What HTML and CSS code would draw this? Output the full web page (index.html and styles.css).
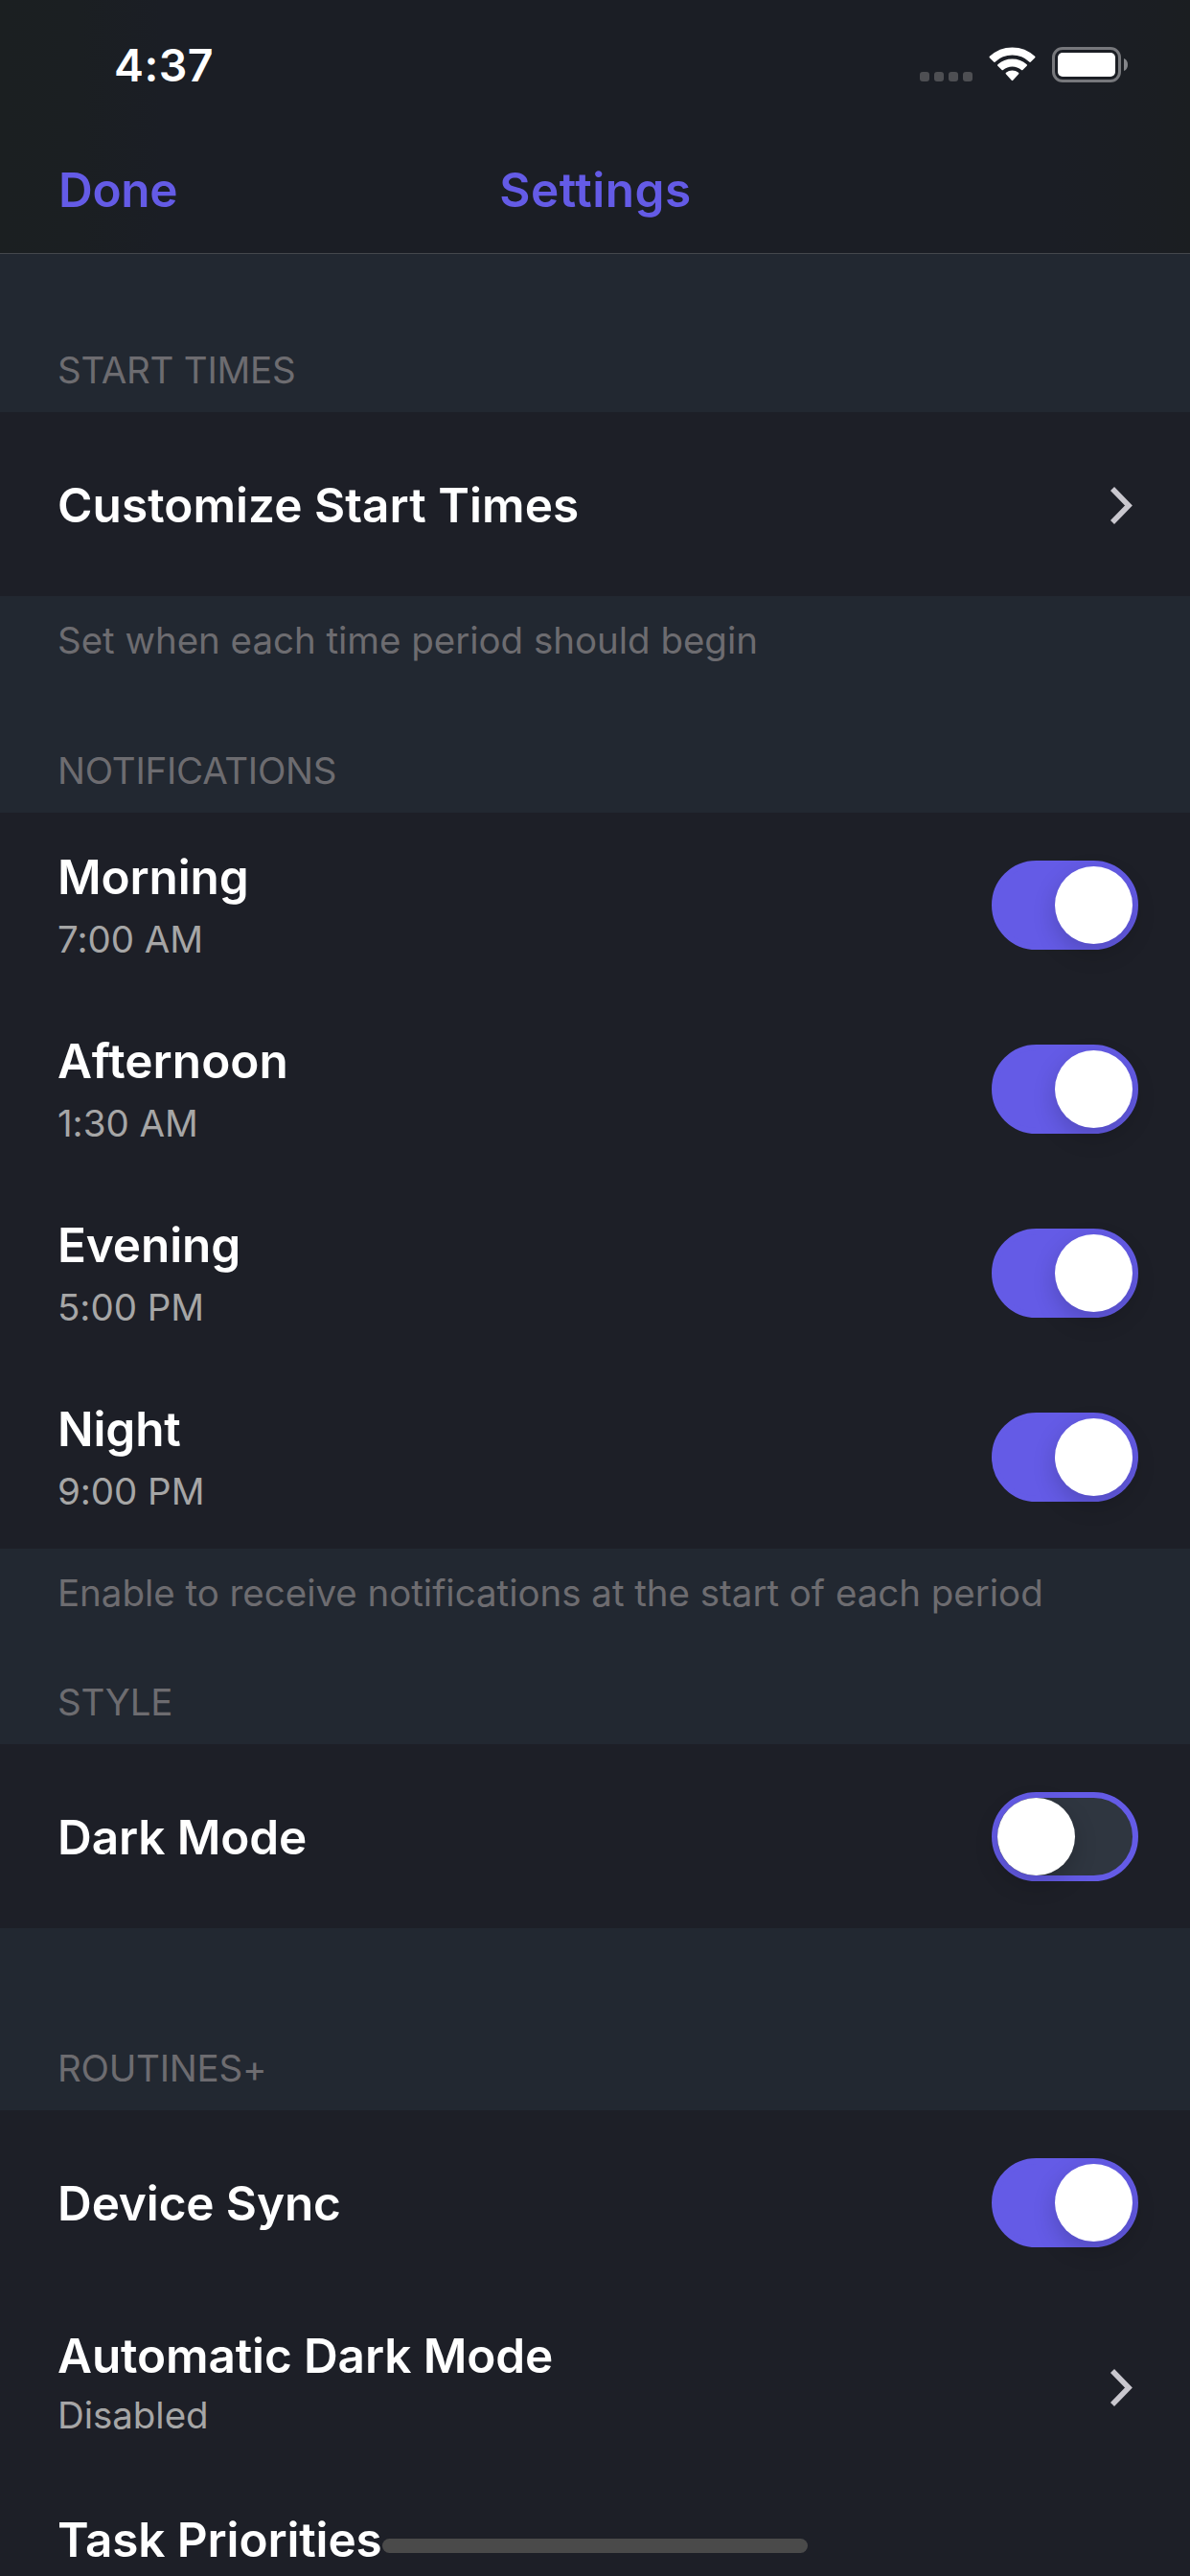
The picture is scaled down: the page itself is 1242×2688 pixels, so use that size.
FILE: index.html
```
<!DOCTYPE html>
<html lang="en">
<head>
<meta charset="utf-8">
<title>Settings</title>
<link rel="stylesheet" href="styles.css">
</head>
<body>
<div class="screen">
  <header class="header">
    <div class="status-bar">
      <span class="time">4:37</span>
      <div class="indicators">
        <div class="cellular"><i></i><i></i><i></i><i></i></div>
        <svg class="wifi" width="49" height="36" viewBox="0 0 49 36" aria-hidden="true">
          <g transform="translate(24.5 35)" fill="#fff" stroke="#fff" stroke-width="2" stroke-linejoin="round">
            <path d="M-23-24.4A33.5 33.5 0 0 1 23-24.4L18.7-20.1A27.5 27.5 0 0 0-18.7-20.1Z"/>
            <path d="M-14.5-15.9A21.5 21.5 0 0 1 14.5-15.9L10.2-11.7A15.5 15.5 0 0 0-10.2-11.7Z"/>
            <path d="M-5.9-7.5A9.5 9.5 0 0 1 5.9-7.5L0-.9Z"/>
          </g>
        </svg>
        <svg class="battery" width="79" height="37" viewBox="0 0 79 37" aria-hidden="true">
          <rect x="1.5" y="1.5" width="69" height="34" rx="9.5" fill="none" stroke="#77787c" stroke-width="3"/>
          <rect x="6" y="6" width="60" height="25" rx="5" fill="#fff"/>
          <path d="M75 12C78 13 79 16 79 18.500S78 24 75 25Z" fill="#85868a"/>
        </svg>
      </div>
    </div>
    <nav class="nav-bar">
      <span class="done">Done</span>
      <span class="nav-title">Settings</span>
    </nav>
  </header>

  <main>
    <h2 class="section-title section-start">START TIMES</h2>
    <section class="group">
      <div class="row single">
        <div class="labels"><div class="label label-wide">Customize Start Times</div></div>
        <svg class="chevron" width="23" height="39" viewBox="0 0 23 39" aria-hidden="true"><path d="M2 2L19 19.500L2 37"/></svg>
      </div>
    </section>
    <p class="footnote">Set when each time period should begin</p>

    <h2 class="section-title section-notifications">NOTIFICATIONS</h2>
    <section class="group">
      <div class="row timed">
        <div class="labels"><div class="label">Morning</div><div class="detail">7:00 AM</div></div>
        <div class="switch on"><i class="knob"></i></div>
      </div>
      <div class="row timed">
        <div class="labels"><div class="label label-wide">Afternoon</div><div class="detail">1:30 AM</div></div>
        <div class="switch on"><i class="knob"></i></div>
      </div>
      <div class="row timed">
        <div class="labels"><div class="label">Evening</div><div class="detail">5:00 PM</div></div>
        <div class="switch on"><i class="knob"></i></div>
      </div>
      <div class="row timed">
        <div class="labels"><div class="label">Night</div><div class="detail">9:00 PM</div></div>
        <div class="switch on"><i class="knob"></i></div>
      </div>
    </section>
    <p class="footnote">Enable to receive notifications at the start of each period</p>

    <h2 class="section-title section-style">STYLE</h2>
    <section class="group">
      <div class="row single">
        <div class="labels"><div class="label">Dark Mode</div></div>
        <div class="switch"><i class="knob"></i></div>
      </div>
    </section>

    <h2 class="section-title section-routines">ROUTINES+</h2>
    <section class="group">
      <div class="row single">
        <div class="labels"><div class="label">Device Sync</div></div>
        <div class="switch on"><i class="knob"></i></div>
      </div>
      <div class="row stacked">
        <div class="labels"><div class="label">Automatic Dark Mode</div><div class="detail">Disabled</div></div>
        <svg class="chevron" width="23" height="39" viewBox="0 0 23 39" aria-hidden="true"><path d="M2 2L19 19.500L2 37"/></svg>
      </div>
      <div class="row stacked">
        <div class="labels"><div class="label">Task Priorities</div></div>
      </div>
    </section>
  </main>
  <div class="home-indicator"></div>
</div>
</body>
</html>
```
FILE: styles.css
```
* {
  box-sizing: border-box;
  margin: 0;
  padding: 0;
}

body {
  background: #222831;
  font-family: Inter, "Liberation Sans", sans-serif;
}

.screen {
  position: relative;
  width: 1242px;
  height: 2688px;
  overflow: hidden;
  background: #222831;
}

/* Header */
.header {
  height: 265px;
  border-bottom: 1px solid #44474c;
  background: linear-gradient(90deg, #1b1f21 0, #1b1f22 80px, #1b1e25 170px, #1b1e25 1100px, #1b1e22 1220px, #1b1e21 100%);
}

.status-bar {
  display: flex;
  justify-content: space-between;
  height: 128px;
  padding: 40px 65px 0 119px;
}

.time {
  color: #fff;
  font-size: 46.5px;
  font-weight: 600;
  line-height: 56px;
  letter-spacing: 0.45px;
}

.indicators {
  display: flex;
  align-items: flex-start;
  padding-top: 9px;
}

.cellular {
  display: flex;
  gap: 5px;
  padding-top: 26px;
  margin-right: 17px;
}

.cellular i {
  width: 10px;
  height: 10px;
  border-radius: 3px;
  background: #4e4f53;
}

.battery {
  margin-left: 17px;
}

.nav-bar {
  display: grid;
  grid-template-columns: 1fr auto 1fr;
  padding: 40px 60px 0 61px;
  color: #645be6;
  font-size: 49.5px;
  font-weight: 600;
  line-height: 60px;
}

.done {
  letter-spacing: -0.3px;
}

.nav-title {
  letter-spacing: 0.5px;
}

/* Section text */
.section-title {
  display: flex;
  align-items: flex-end;
  padding: 0 60px 20px;
  color: #6d6c70;
  font-size: 38.5px;
  font-weight: 400;
  line-height: 48px;
  letter-spacing: -0.25px;
}

.section-start { height: 165px; }
.section-notifications { height: 156px; }
.section-style { height: 134px; }
.section-routines { height: 190px; }

.footnote {
  height: 70px;
  padding: 22px 60px 0;
  color: #6d6c70;
  font-size: 38.5px;
  line-height: 48px;
  letter-spacing: -0.03px;
}

/* Rows */
.group {
  background: #1d1f27;
}

.row {
  display: flex;
  justify-content: space-between;
  align-items: flex-start;
  height: 192px;
  padding: 0 54px 0 60px;
}

.labels {
  display: flex;
  flex-direction: column;
}

.single .labels { padding-top: 67px; }
.timed .labels { padding-top: 37px; gap: 11px; }
.stacked .labels { padding-top: 34px; gap: 8px; }

.label {
  color: #fff;
  font-size: 49.5px;
  font-weight: 600;
  line-height: 60px;
  letter-spacing: -0.12px;
}

.label-wide {
  letter-spacing: 0.06px;
}

.detail {
  color: #a6a6a6;
  font-size: 38.5px;
  line-height: 48px;
  letter-spacing: -0.05px;
}

.chevron {
  margin: 78px 6px 0 0;
  fill: none;
  stroke: #c9c7ce;
  stroke-width: 5.6;
}

.switch {
  display: flex;
  width: 153px;
  height: 93px;
  margin-top: 50px;
  border: 6px solid #645be6;
  border-radius: 47px;
  background: #2f3640;
}

.switch.on {
  justify-content: flex-end;
  background: #645be6;
}

.knob {
  width: 81px;
  height: 81px;
  border-radius: 50%;
  background: #fff;
  box-shadow: 0 9px 24px rgba(0, 0, 0, 0.18);
}

.home-indicator {
  position: absolute;
  left: 399px;
  bottom: 24px;
  width: 444px;
  height: 15px;
  border-radius: 8px;
  background: #4a4a4a;
}
```
